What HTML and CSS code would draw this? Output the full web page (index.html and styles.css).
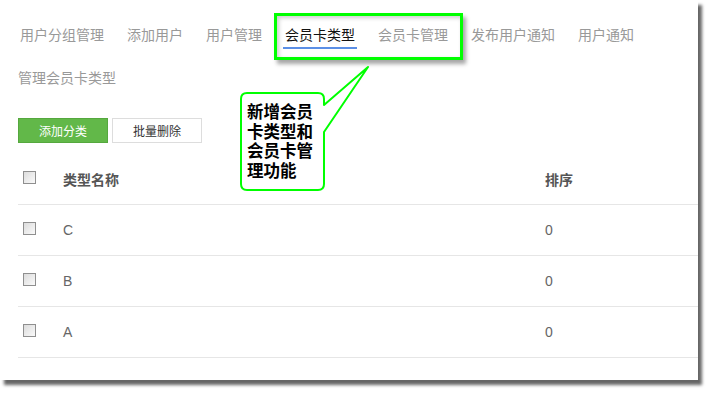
FILE: index.html
```html
<!DOCTYPE html>
<html>
<head>
    <title>会员卡类型</title>
    <link rel="stylesheet" href="styles.css">
</head>
<body>
    <div class="frame">
        <!-- tabs -->
        <div class="tabs">
            <a href="#" class="tab">用户分组管理</a>
            <a href="#" class="tab">添加用户</a>
            <a href="#" class="tab">用户管理</a>
            <a href="#" class="tab active">会员卡类型</a>
            <a href="#" class="tab">会员卡管理</a>
            <a href="#" class="tab">发布用户通知</a>
            <a href="#" class="tab">用户通知</a>
            <a href="#" class="tab">管理会员卡类型</a>
        </div>

        <div class="toolbar">
            <button class="btn btn-green">添加分类</button>
            <button class="btn btn-plain">批量删除</button>
        </div>

        <table class="list">
            <tr>
                <th class="col-check"><span class="check"></span></th>
                <th class="col-name">类型名称</th>
                <th class="col-sort">排序</th>
            </tr>
            <tr>
                <td class="col-check"><span class="check"></span></td>
                <td>C</td>
                <td>0</td>
            </tr>
            <tr>
                <td class="col-check"><span class="check"></span></td>
                <td>B</td>
                <td>0</td>
            </tr>
            <tr>
                <td class="col-check"><span class="check"></span></td>
                <td>A</td>
                <td>0</td>
            </tr>
        </table>

        <!-- annotation overlay -->
        <div class="highlight"></div>
        <div class="callout">
            <svg width="140" height="135" viewBox="0 0 140 135">
                <path d="M11,33 H82 Q88,33 88,39 V45 L132,7 L88,72 V124 Q88,130 82,130 H11 Q5,130 5,124 V39 Q5,33 11,33 Z"
                      fill="#fff" stroke="#00ff00" stroke-width="2" stroke-linejoin="round"/>
            </svg>
            <div class="callout-text">新增会员<br>卡类型和<br>会员卡管<br>理功能</div>
        </div>
    </div>
</body>
</html>
```

FILE: styles.css
```css
/* page is a snipped screenshot: white card with a drop shadow */
body {
    margin: 0;
    padding: 0 0 15px;
    background-color: #fff;
    font-family: "Noto Sans CJK SC", "Liberation Sans", sans-serif;
}
.frame {
    position: relative;
    width: 698px;
    height: 380px;
    background-color: #fff;
    box-shadow: 4px 5px 3px rgba(0, 0, 0, 0.6);
}
.tabs {
    display: flex;
    flex-wrap: wrap;
    column-gap: 23px;
    row-gap: 8px;
    padding: 14px 0 0 20px;
    width: 640px;
}
.tab {
    font-size: 14px;
    line-height: 20px;
    color: #999;
    text-decoration: none;
    padding: 10px 0 3px;
    border-bottom: 2px solid transparent;
}
.tab:last-child {
    margin-left: -2px;
}
.tab.active {
    color: #111;
    border-bottom-color: #5b8fe6;
    margin: 0 -2px;
    padding-left: 2px;
    padding-right: 2px;
}
.toolbar {
    display: flex;
    gap: 4px;
    margin: 26px 0 0 18px;
}
.btn {
    width: 90px;
    height: 25px;
    font-family: "Noto Sans CJK SC", sans-serif;
    font-size: 12px;
    padding: 0;
    cursor: pointer;
}
.btn-green {
    background-color: #62b849;
    border: 1px solid #55a83e;
    color: #fff;
}
.btn-plain {
    background-color: #fff;
    border: 1px solid #ddd;
    color: #333;
}
.list {
    margin: 10px 0 0 18px;
    width: 680px;
    border-collapse: collapse;
}
.list th, .list td {
    height: 50px;
    padding: 0;
    text-align: left;
    border-bottom: 1px solid #e6e6e6;
    font-size: 14px;
    color: #666;
}
.list td {
    font-family: "Liberation Sans", sans-serif;
}
.list th {
    font-weight: bold;
    color: #555;
    padding-top: 1px;
}
.col-check {
    width: 40px;
    padding-left: 5px !important;
}
.col-name {
    width: 482px;
}
.check {
    display: block;
    width: 11px;
    height: 11px;
    border: 1px solid #8f8f8f;
    background: linear-gradient(135deg, #dcdcdc, #fafafa);
    margin-top: -3px;
}
.highlight {
    position: absolute;
    left: 274px;
    top: 13px;
    width: 183px;
    height: 41px;
    border: 3px solid #00ff00;
    box-shadow: 3px 4px 4px rgba(0, 0, 0, 0.35), inset 2px 2px 4px rgba(0, 0, 0, 0.2);
}
.callout {
    position: absolute;
    left: 236px;
    top: 60px;
    width: 140px;
    height: 135px;
}
.callout svg {
    display: block;
}
.callout-text {
    position: absolute;
    left: 11px;
    top: 42px;
    font-size: 16.5px;
    line-height: 19.5px;
    font-weight: bold;
    color: #000;
}
```
